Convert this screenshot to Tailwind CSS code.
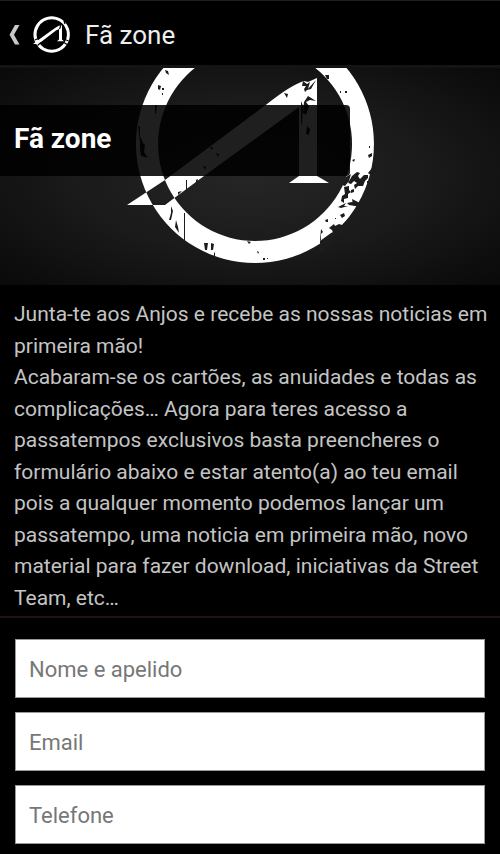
<!DOCTYPE html>
<html lang="pt">
<head>
<meta charset="utf-8">
<meta name="viewport" content="width=device-width, initial-scale=1">
<title>Fã zone</title>
<script src="https://cdn.jsdelivr.net/npm/@tailwindcss/browser@4"></script>
</head>
<body class="bg-black font-[Roboto,sans-serif] text-[#c4c4c4]">
<header class="flex h-[65px] items-center border-t border-[#1e1e1e] pt-1 pl-2">
  <a href="#" aria-label="Voltar" class="flex items-center">
    <svg class="h-5 w-3" viewBox="0 0 12 20" fill="#c8c8c8" aria-hidden="true"><path d="M7 0H11.500L6 9.700L11.500 19.500H7L1.500 9.700Z"/></svg>
    <svg class="ml-3 h-10 w-10" viewBox="0 0 40 40" aria-hidden="true">
      <path fill="#fff" fill-rule="evenodd" d="M19.700 1.300A18.200 18.200 0 1 1 19.600 1.300ZM19.700 4.300A15.200 15.200 0 1 0 19.800 4.300Z"/>
      <path fill="#fff" d="M1 29L7 24.500L23 13Q26 10.500 30 10V24.500L32 26.200H25L27 24.500V14L24 15.500L9 27L7 29Z"/>
      <path fill="none" stroke="#000" stroke-width="1.200" d="M3 25L6 23.500M5.500 30.500L9 27.500M33 24.500L36.500 26M32 27.500L35 29.500M29 10L27.500 14M32 6L33 9"/>
    </svg>
  </a>
  <h1 class="ml-[13px] text-[26px] leading-8 text-[#eee]">Fã zone</h1>
</header>
<main>
  <section class="relative bg-[radial-gradient(ellipse_at_center,#262626_0%,#1a1a1a_50%,#090909_100%)]">
    <svg class="block w-full" viewBox="0 65 500 220" aria-hidden="true">
      <rect y="65" width="500" height="3" fill="#141414"/>
      <clipPath id="band"><rect y="68" width="500" height="217"/></clipPath>
      <g clip-path="url(#band)">
        <path fill="#fff" fill-rule="evenodd" d="M255 25A119 119 0 1 1 254.900 25ZM255 47A97 97 0 1 0 255.100 47ZM127 205L165 180L267 104Q291 85 304 81L308 82L317 78V176L329 183H289L299 176V107L204 176L173 199L165 205Z"/>
        <g fill="#1c1c1c">
          <path d="M165 70l3 1 1 4-3-2zM158 85l3 1-1 4-2-1zM162 88h2v2h-2zM162 93h1v2h-1zM155 105l2 0-1 9-1-1z"/>
          <path d="M138 126l2 1 0 9 3 7 2 2-1 7 4 6-3-1-4-1-1-8 0-6zM210 147l3 0-1 3zM216 153l3 1-1 3zM203 166l3 1-1 3z"/>
          <path d="M303 81l4 3 3-2-2 7-3 3-1-3 2-3-4 0zM307 90l9-10-5 9zM308 96l8 5-6-1-4 2 3 4-3 9-3-2 1-11zM284 93l4 1-1 4zM301 101l2 5-1 20-1-4zM307 126l3 3-1 6-3-1z"/>
          <path d="M325 75l4 0 0 4-2 0zM340 91h1v2h-1zM345 91h2v2h-2zM369 146h1v2h-1zM368 155l4-2 0 3-3 2zM352 160l3-1-1 3zM374 162l-2 6-4 5 4 3 5-4z"/>
          <path d="M352 176l5-4 3 1-2 3 2 3 4-4 4 0 0 3-3 3-2 5-5 0-3 3-1-4 3-2-3-2-3 3-3-1zM346 177l5-3-2 7-4 5-3-1zM344 187l5-1 0 4 2 2-3 2 0 4-4 1 0 4-3-2 1-5 3-2zM351 190l3-1 0 3-3 1zM347 203l5-1 5 2-2 2-6-1zM352 199l8 4-2 4-5-2zM362 199l5 1-3 5-7 8-2-1 4-6zM338 207l8-4-2 3 4 0-7 2zM340 215l4-2 1 3-3 2zM367 181h1v2h-1zM344 195h1v2h-1z"/>
          <path d="M325 220l3-1 0 3-2 0zM335 218h1v1h-1zM329 228l5-4 1 2 4-2 3 1 4-4 1 3-4 6-6 5-2-3-2 1-1-3zM321 229l-1 12h1l0-7 2-2zM320 241l11-8 6-3 3 3-17 19h-3z"/>
          <path d="M171 206l2 5-2 9-2 0 2-7zM176 220l2 7 1 6-4-6zM184 213h1v28h-1zM186 180h1v12h-1zM196 180l2-1-1 6-1-1zM178 192l4-1-4 4zM204 243h4l-1 7-2 0zM211 243l3 1-1 6-2 0zM214 252l1 1v4h-1zM247 241l4 1-2 2zM257 251l2 1-1 2zM263 258h2v2h-2zM267 258h1v1h-1z"/>
        </g>
      </g>
    </svg>
    <h2 class="absolute top-10 left-0 flex h-[71px] w-[70%] items-center rounded-r bg-black/88 pr-4 pb-1 pl-[14px] text-[28px] leading-8 font-bold text-white">Fã zone</h2>
  </section>
  <section class="pt-[14px] pr-2 pb-[2px] pl-[14px] text-[21px] leading-normal">
    <p>Junta-te aos Anjos e recebe as nossas noticias em primeira mão!</p>
    <p>Acabaram-se os cartões, as anuidades e todas as complicações… Agora para teres acesso a passatempos exclusivos basta preencheres o formulário abaixo e estar atento(a) ao teu email pois a qualquer momento podemos lançar um passatempo, uma noticia em primeira mão, novo material para fazer download, iniciativas da Street Team, etc…</p>
  </section>
  <form class="flex flex-col gap-[14px] border-t-2 border-[#201313] px-[15px] pt-[21px] pb-[10px]">
    <input type="text" aria-label="Nome e apelido" placeholder="Nome e apelido" class="h-[59px] w-full border border-[#999] bg-white px-[13px] pt-[2px] text-[22px] text-black placeholder:text-[#777]">
    <input type="email" aria-label="Email" placeholder="Email" class="h-[59px] w-full border border-[#999] bg-white px-[13px] pt-[2px] text-[22px] text-black placeholder:text-[#777]">
    <input type="tel" aria-label="Telefone" placeholder="Telefone" class="h-[59px] w-full border border-[#999] bg-white px-[13px] pt-[2px] text-[22px] text-black placeholder:text-[#777]">
  </form>
</main>
</body>
</html>
